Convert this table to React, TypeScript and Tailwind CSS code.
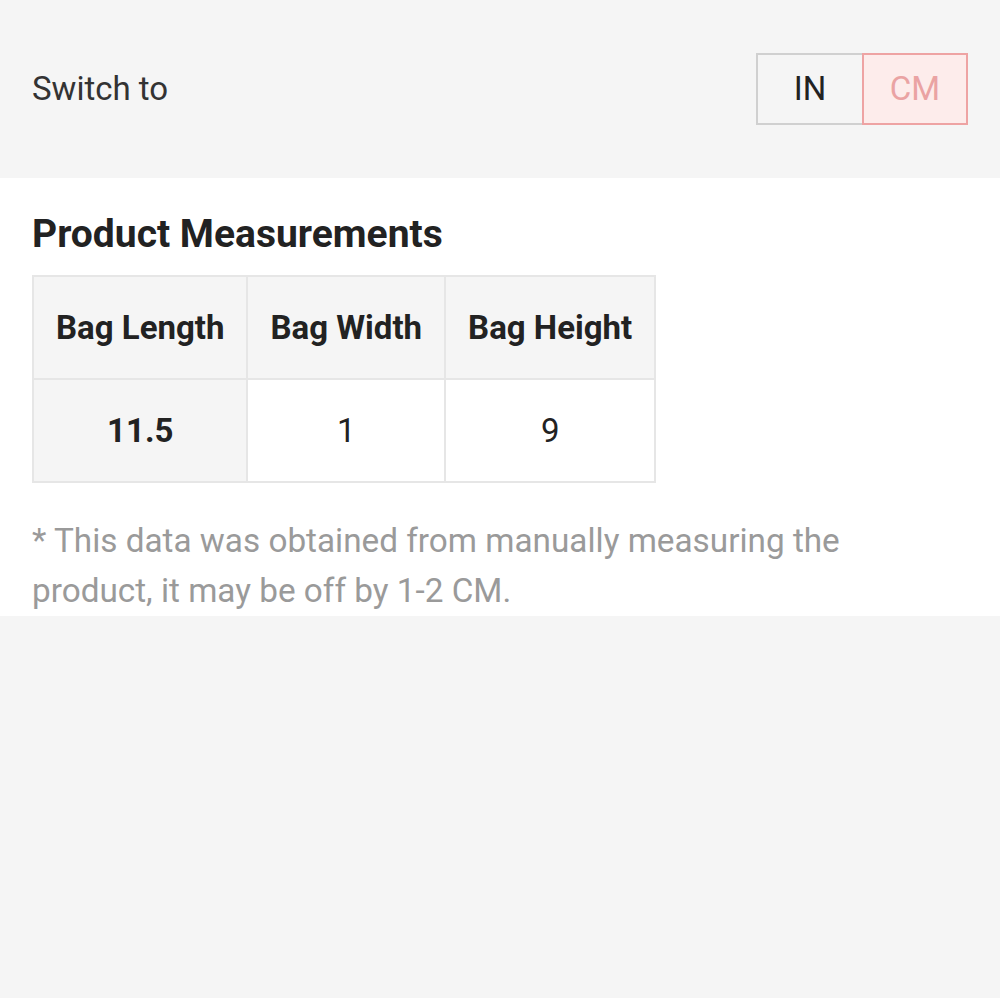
export default function App() {
    const headers = ["Bag Length", "Bag Width", "Bag Height"];
    const values = ["11.5", "1", "9"];

    return (
        <div
            className="min-h-[998px] bg-[#f5f5f5] text-[#222]"
            style={{ fontFamily: "Roboto, 'Liberation Sans', sans-serif" }}
        >
            {/* 단위 전환 */}
            <div className="h-[178px] flex items-center justify-between pl-8 pr-8">
                <span className="text-[33px] text-[#333]">Switch to</span>
                <div className="flex h-[72px]">
                    <button className="w-[106px] border-2 border-[#d0d0d0] border-r-0 text-[33px] text-[#222]">
                        IN
                    </button>
                    <button className="w-[106px] border-2 border-[#eea3a3] bg-[#fdeceb] text-[33px] text-[#eaa3a3]">
                        CM
                    </button>
                </div>
            </div>

            {/* 측정값 */}
            <section className="bg-white px-8 pt-[37px]">
                <h2 className="text-[39px] font-bold leading-none">
                    Product Measurements
                </h2>
                <table className="mt-[21px] border-collapse border-2 border-[#e6e6e6]">
                    <tbody>
                        <tr className="h-[103px] bg-[#f5f5f5]">
                            {headers.map((h) => (
                                <th
                                    key={h}
                                    className="border-2 border-[#e6e6e6] px-[22px] text-[33px] font-bold"
                                >
                                    {h}
                                </th>
                            ))}
                        </tr>
                        <tr className="h-[103px]">
                            {values.map((v, i) => (
                                <td
                                    key={i}
                                    className={
                                        i === 0
                                            ? "border-2 border-[#e6e6e6] bg-[#f5f5f5] text-center text-[33px] font-bold"
                                            : "border-2 border-[#e6e6e6] text-center text-[33px]"
                                    }
                                >
                                    {v}
                                </td>
                            ))}
                        </tr>
                    </tbody>
                </table>
                <p className="mt-[33px] text-[33.3px] leading-[50px] text-[#9a9a9a]">
                    * This data was obtained from manually measuring the
                    <br />
                    product, it may be off by 1-2 CM.
                </p>
            </section>
        </div>
    );
}
